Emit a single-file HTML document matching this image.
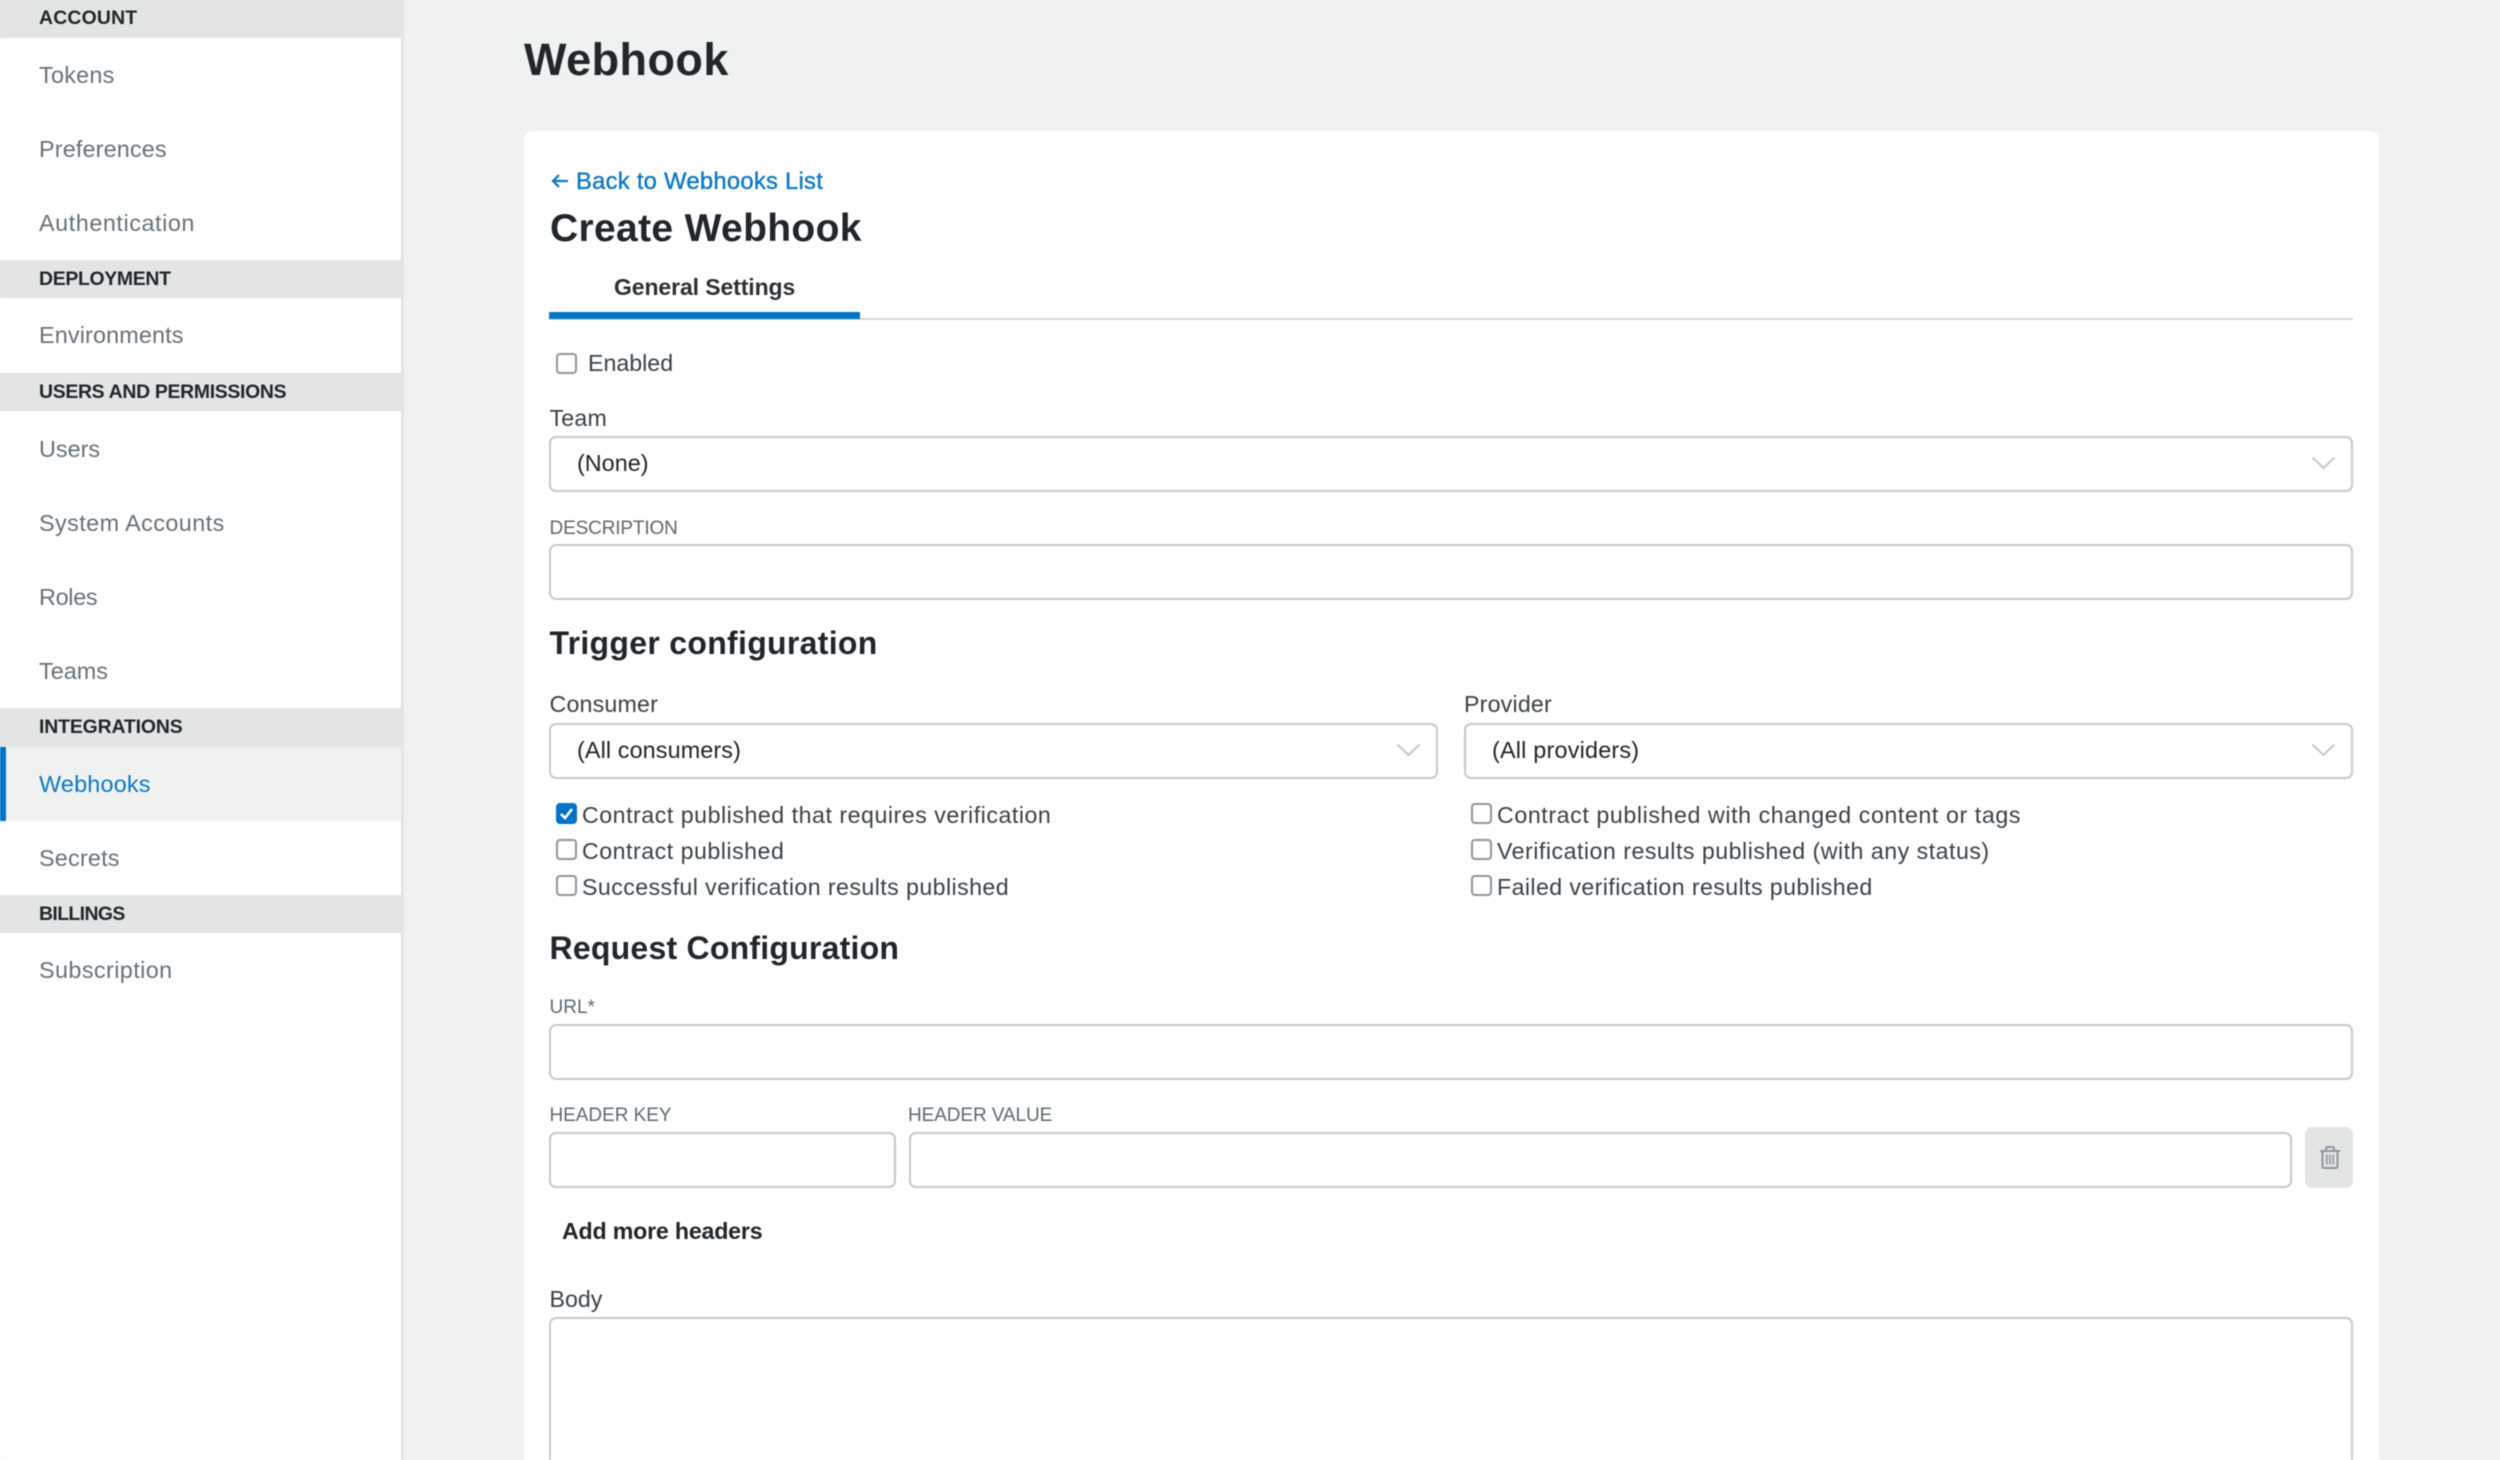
<!DOCTYPE html>
<html lang="en">
<head>
<meta charset="utf-8">
<title>Webhook</title>
<style>
html,body{margin:0;padding:0;background:#f0f2f1}
body{width:2500px;height:1460px;overflow:hidden;position:relative;font-family:"Liberation Sans",sans-serif}
#w{position:absolute;left:0;top:0;width:2500px;height:1460px;overflow:hidden;filter:blur(.45px)}
.a{position:absolute;box-sizing:border-box}
.t{position:absolute;white-space:nowrap;line-height:1}
.n{font-size:23.4px;color:#67727a;left:39px}
.h{font-size:19.4px;font-weight:bold;color:#20262b;left:39px}
.bar{position:absolute;left:0;width:401px;background:#e3e5e5}
.l{font-size:23.2px;color:#3a4248}
.s{font-size:19px;color:#5f6a72}
.c{font-size:23.2px;color:#3a4248}
.f{position:absolute;box-sizing:border-box;background:#fff;border:2px solid #c4cacd;border-radius:7px}
.b{position:absolute;box-sizing:border-box;width:21px;height:21px;background:#fff;border:2px solid #8f979c;border-radius:4px}
.k{font-size:23.4px;color:#20262b}
</style>
</head>
<body>
<div id="w">
<div class="a" style="left:0;top:0;width:401px;height:1460px;background:#fff"></div>
<div class="a" style="left:401px;top:0;width:2.5px;height:1460px;background:#e3e5e5"></div>

<div class="bar" style="top:0;height:37.7px"></div>
<div class="bar" style="top:260px;height:38.4px"></div>
<div class="bar" style="top:373px;height:38.4px"></div>
<div class="bar" style="top:708px;height:38.6px"></div>
<div class="bar" style="top:895px;height:38.4px"></div>
<div class="a" style="left:0;top:746.6px;width:401px;height:74px;background:#f0f2f1"></div>
<div class="a" style="left:0;top:746.6px;width:6px;height:74px;background:#0074c7"></div>

<div class="t h" style="top:9.1px;letter-spacing:.2px">ACCOUNT</div>
<div class="t n" style="top:64px;letter-spacing:.25px">Tokens</div>
<div class="t n" style="top:138px;letter-spacing:.15px">Preferences</div>
<div class="t n" style="top:212px;letter-spacing:.55px">Authentication</div>
<div class="t h" style="top:270.1px;letter-spacing:-.3px">DEPLOYMENT</div>
<div class="t n" style="top:324.2px;letter-spacing:.13px">Environments</div>
<div class="t h" style="top:383.1px;letter-spacing:-.3px">USERS AND PERMISSIONS</div>
<div class="t n" style="top:437.8px">Users</div>
<div class="t n" style="top:511.8px;letter-spacing:.42px">System Accounts</div>
<div class="t n" style="top:586px;letter-spacing:-.3px">Roles</div>
<div class="t n" style="top:660px">Teams</div>
<div class="t h" style="top:718.1px;letter-spacing:-.13px">INTEGRATIONS</div>
<div class="t n" style="top:772.6px;color:#0a78c8;letter-spacing:.2px">Webhooks</div>
<div class="t n" style="top:846.8px;letter-spacing:.2px">Secrets</div>
<div class="t h" style="top:905.1px;letter-spacing:-.6px">BILLINGS</div>
<div class="t n" style="top:959px;letter-spacing:.4px">Subscription</div>

<div class="t" style="left:524px;top:37px;font-size:45px;font-weight:bold;color:#20262b;letter-spacing:.45px">Webhook</div>

<div class="a" style="left:524px;top:131px;width:1855px;height:1340px;background:#fff;border-radius:9px"></div>

<svg class="a" style="left:550px;top:172px" width="20" height="18" viewBox="0 0 20 18"><path d="M18 9H3M9 3L3 9l6 6" fill="none" stroke="#0a78c8" stroke-width="2.2"/></svg>
<div class="t" style="left:576px;top:170px;font-size:23.8px;letter-spacing:.26px;color:#0a78c8;-webkit-text-stroke:.35px #0a78c8">Back to Webhooks List</div>
<div class="t" style="left:550px;top:209px;font-size:39px;font-weight:bold;color:#20262b;letter-spacing:.34px">Create Webhook</div>
<div class="t" style="left:614px;top:276px;font-size:23px;font-weight:bold;color:#2a3136;letter-spacing:-.1px">General Settings</div>
<div class="a" style="left:549px;top:318px;width:1804px;height:2px;background:#d3d7d9"></div>
<div class="a" style="left:549px;top:312px;width:311px;height:6.5px;background:#0074c7"></div>

<div class="b" style="left:556px;top:353px"></div>
<div class="t l" style="left:588px;top:352.2px">Enabled</div>

<div class="t l" style="left:549.5px;top:406.7px;letter-spacing:.2px">Team</div>
<div class="f" style="left:549px;top:436px;width:1804px;height:56px"></div>
<div class="t k" style="left:577px;top:452px">(None)</div>
<svg class="a" style="left:2311px;top:456px" width="25" height="14" viewBox="0 0 25 14"><path d="M1.5 1.5L12.5 12 23.5 1.5" fill="none" stroke="#c4cacd" stroke-width="2"/></svg>

<div class="t s" style="left:549.5px;top:518.6px;letter-spacing:-.15px">DESCRIPTION</div>
<div class="f" style="left:549px;top:544px;width:1804px;height:56px"></div>

<div class="t" style="left:549.5px;top:627px;font-size:32px;font-weight:bold;color:#20262b;letter-spacing:.3px">Trigger configuration</div>

<div class="t l" style="left:549.5px;top:692.8px;letter-spacing:.2px">Consumer</div>
<div class="f" style="left:549px;top:723px;width:889px;height:56px"></div>
<div class="t k" style="left:577px;top:739px;letter-spacing:.1px">(All consumers)</div>
<svg class="a" style="left:1396px;top:743px" width="25" height="14" viewBox="0 0 25 14"><path d="M1.5 1.5L12.5 12 23.5 1.5" fill="none" stroke="#c4cacd" stroke-width="2"/></svg>

<div class="t l" style="left:1464px;top:692.8px;letter-spacing:.2px">Provider</div>
<div class="f" style="left:1464px;top:723px;width:889px;height:56px"></div>
<div class="t k" style="left:1492px;top:739px;letter-spacing:.2px">(All providers)</div>
<svg class="a" style="left:2311px;top:743px" width="25" height="14" viewBox="0 0 25 14"><path d="M1.5 1.5L12.5 12 23.5 1.5" fill="none" stroke="#c4cacd" stroke-width="2"/></svg>

<svg class="a" style="left:556px;top:803px" width="21" height="21" viewBox="0 0 21 21"><rect width="21" height="21" rx="4" fill="#0074c7"/><path d="M5 11l4 4 7-9" fill="none" stroke="#fff" stroke-width="2.6"/></svg>
<div class="t c" style="left:582px;top:804px;letter-spacing:.52px">Contract published that requires verification</div>
<div class="b" style="left:556px;top:839px"></div>
<div class="t c" style="left:582px;top:839.5px;letter-spacing:.5px">Contract published</div>
<div class="b" style="left:556px;top:875px;top:874.5px"></div>
<div class="t c" style="left:582px;top:875.5px;letter-spacing:.42px">Successful verification results published</div>

<div class="b" style="left:1471px;top:803px"></div>
<div class="t c" style="left:1497px;top:804px;letter-spacing:.59px">Contract published with changed content or tags</div>
<div class="b" style="left:1471px;top:839px"></div>
<div class="t c" style="left:1497px;top:839.5px;letter-spacing:.49px">Verification results published (with any status)</div>
<div class="b" style="left:1471px;top:874.5px"></div>
<div class="t c" style="left:1497px;top:875.5px;letter-spacing:.4px">Failed verification results published</div>

<div class="t" style="left:549.5px;top:931.5px;font-size:32px;font-weight:bold;color:#20262b;letter-spacing:.23px">Request Configuration</div>

<div class="t s" style="left:549.5px;top:998px">URL*</div>
<div class="f" style="left:549px;top:1024px;width:1804px;height:56px"></div>

<div class="t s" style="left:549.5px;top:1106px;letter-spacing:-.05px">HEADER KEY</div>
<div class="t s" style="left:908px;top:1106px;letter-spacing:-.1px">HEADER VALUE</div>
<div class="f" style="left:549px;top:1132px;width:346.5px;height:56px"></div>
<div class="f" style="left:908.5px;top:1132px;width:1383.5px;height:56px"></div>
<div class="a" style="left:2305px;top:1127px;width:48px;height:61px;background:#e3e5e5;border-radius:7px"></div>
<svg class="a" style="left:2319px;top:1145px" width="22" height="25" viewBox="0 0 22 25"><g fill="none" stroke="#8d979d" stroke-width="2"><path d="M1 6H21M7 6V3.5Q7 2 8.5 2H13.5Q15 2 15 3.5V6M3.5 6V21.5Q3.5 23 5 23H17Q18.5 23 18.5 21.5V6"/><path d="M7.8 9.5V19.5M11 9.5V19.5M14.2 9.5V19.5" stroke-width="1.6"/></g></svg>

<div class="t" style="left:562px;top:1219.5px;font-size:23.2px;font-weight:bold;color:#20262b;letter-spacing:-.2px">Add more headers</div>

<div class="t l" style="left:549.5px;top:1287.5px">Body</div>
<div class="f" style="left:549px;top:1317px;width:1804px;height:200px"></div>
</div>
</body>
</html>
